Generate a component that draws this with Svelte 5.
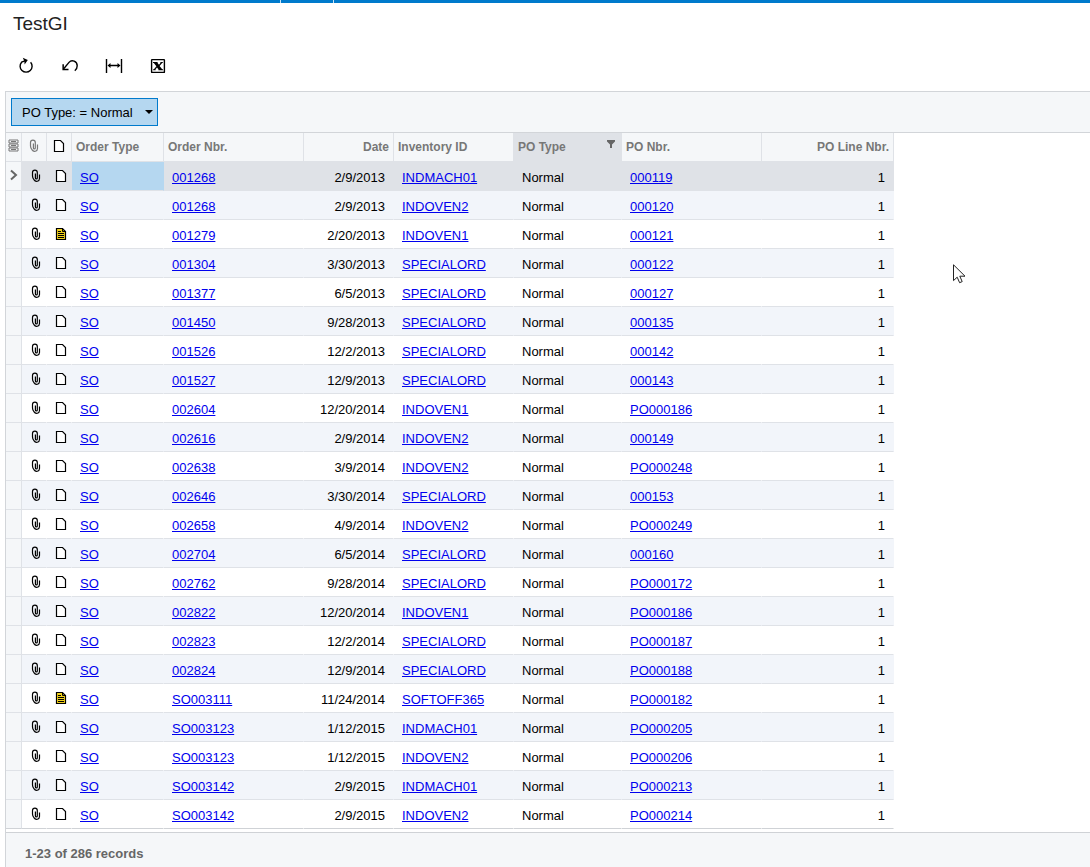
<!-- Generic inquiry screen: toolbar, filter bar and result grid -->
<script>
  let filter = "PO Type: = Normal";
  let total = 286;
  let selected = 0;

  const columns = [
    { title: "Order Type", width: 92 },
    { title: "Order Nbr.", width: 140 },
    { title: "Date", width: 90, right: true },
    { title: "Inventory ID", width: 120 },
    { title: "PO Type", width: 108, filtered: true },
    { title: "PO Nbr.", width: 140 },
    { title: "PO Line Nbr.", width: 132, right: true },
  ];

  const rows = [
    { nbr: "001268", date: "2/9/2013", item: "INDMACH01", po: "000119" },
    { nbr: "001268", date: "2/9/2013", item: "INDOVEN2", po: "000120" },
    { nbr: "001279", date: "2/20/2013", item: "INDOVEN1", po: "000121", note: true },
    { nbr: "001304", date: "3/30/2013", item: "SPECIALORD", po: "000122" },
    { nbr: "001377", date: "6/5/2013", item: "SPECIALORD", po: "000127" },
    { nbr: "001450", date: "9/28/2013", item: "SPECIALORD", po: "000135" },
    { nbr: "001526", date: "12/2/2013", item: "SPECIALORD", po: "000142" },
    { nbr: "001527", date: "12/9/2013", item: "SPECIALORD", po: "000143" },
    { nbr: "002604", date: "12/20/2014", item: "INDOVEN1", po: "PO000186" },
    { nbr: "002616", date: "2/9/2014", item: "INDOVEN2", po: "000149" },
    { nbr: "002638", date: "3/9/2014", item: "INDOVEN2", po: "PO000248" },
    { nbr: "002646", date: "3/30/2014", item: "SPECIALORD", po: "000153" },
    { nbr: "002658", date: "4/9/2014", item: "INDOVEN2", po: "PO000249" },
    { nbr: "002704", date: "6/5/2014", item: "SPECIALORD", po: "000160" },
    { nbr: "002762", date: "9/28/2014", item: "SPECIALORD", po: "PO000172" },
    { nbr: "002822", date: "12/20/2014", item: "INDOVEN1", po: "PO000186" },
    { nbr: "002823", date: "12/2/2014", item: "SPECIALORD", po: "PO000187" },
    { nbr: "002824", date: "12/9/2014", item: "SPECIALORD", po: "PO000188" },
    { nbr: "SO003111", date: "11/24/2014", item: "SOFTOFF365", po: "PO000182", note: true },
    { nbr: "SO003123", date: "1/12/2015", item: "INDMACH01", po: "PO000205" },
    { nbr: "SO003123", date: "1/12/2015", item: "INDOVEN2", po: "PO000206" },
    { nbr: "SO003142", date: "2/9/2015", item: "INDMACH01", po: "PO000213" },
    { nbr: "SO003142", date: "2/9/2015", item: "INDOVEN2", po: "PO000214" },
  ];
</script>

{#snippet clip()}
  <svg class="clip" width="10" height="14" viewBox="0 0 10 14">
    <path d="M8.5 5.5v4a2.9 2.9 0 0 1-5.4 1.4C1.8 9.5 1.5 8.5 1.5 7V3.6a2.4 2.4 0 0 1 4.8 0V9a.9.9 0 0 1-1.9 0V4.5" />
  </svg>
{/snippet}

{#snippet page(note)}
  <svg class="page" width="12" height="14" viewBox="0 0 12 14">
    {#if note}
      <path class="noted" d="M1.5 1.5h6l3 3v8h-9z" />
      <path d="M7.5 1.5v3h3M3 4.5h3M3 6.5h6M3 8.5h6M3 10.5h6" />
    {:else}
      <path class="blank" d="M1.5 1.5h6l3 3v8h-9z" />
    {/if}
  </svg>
{/snippet}

<div class="screen">
  <div class="topbar"><span class="menu"></span><span class="tab"></span></div>

  <h1>TestGI</h1>

  <div class="toolbar">
    <button type="button" aria-label="Refresh">
      <svg width="16" height="18" viewBox="0 0 16 18">
        <path d="M12.6 5.2A6 6 0 1 1 3.6 5.2L7.5 3.6" />
        <path class="solid" d="M4.8 .8L9.8 3L6.6 7.6L6.4 4.2z" />
      </svg>
    </button>
    <button type="button" aria-label="Undo">
      <svg width="16" height="18" viewBox="0 0 16 18">
        <path d="M1.5 12L7 5.4C9.8 2 15.2 4.2 15.2 8.8c0 2.3-.9 3.9-2.4 5" />
        <path class="solid" d="M0.4 7.2h1.5v4.6h4.6v1.5H0.4z" />
      </svg>
    </button>
    <button type="button" aria-label="Fit columns">
      <svg width="18" height="18" viewBox="0 0 18 18">
        <path d="M1.5 2v14M16.5 2v14M4 8.5h10" />
        <path class="solid" d="M2.5 8.5l3-2.5v5zM15.5 8.5l-3-2.5v5z" />
      </svg>
    </button>
    <button type="button" aria-label="Export to Excel">
      <svg width="16" height="18" viewBox="0 0 16 18">
        <rect x="1.6" y="2.6" width="12.8" height="12.8" rx="0.5" />
        <path class="solid" d="M3 5h4.6v1L9 7.8 10.4 6V5h2.4v1h-.7L9.6 9l2.6 3.2h.8v1H8.4v-1L7 10.4 5.6 12.2v1H3.1v-1h.8l2.5-3L3.8 6H3z" />
      </svg>
    </button>
  </div>

  <main>
    <div class="filters">
      <button type="button">
        {filter}
        <svg width="8" height="4" viewBox="0 0 8 4"><path d="M0 0h8L4 4z" /></svg>
      </button>
    </div>

    <table>
      <colgroup>
        <col class="mark" />
        <col class="icon" />
        <col class="icon" />
        {#each columns as column}
          <col style="width: {column.width}px" />
        {/each}
      </colgroup>
      <thead>
        <tr>
          <th class="glyph">
            <svg class="config" width="11" height="14" viewBox="0 0 11 14">
              <path d="M1 1h9v3H1zM1 5h9v3H1zM1 9h9v3H1zM3 2.5h5M3 6.5h5M3 10.5h5" />
            </svg>
          </th>
          <th class="glyph files">{@render clip()}</th>
          <th class="glyph">{@render page(false)}</th>
          {#each columns as column}
            <th class:right={column.right} class:filtered={column.filtered}>
              {column.title}
              {#if column.filtered}
                <svg class="funnel" width="8" height="8" viewBox="0 0 8 8"><path d="M0 0h8v1.5L5 4.5V8H3V4.5L0 1.5z" /></svg>
              {/if}
            </th>
          {/each}
        </tr>
      </thead>
      <tbody>
        {#each rows as row, i}
          <tr class:selected={i === selected}>
            <td class="glyph marker">
              {#if i === selected}
                <svg class="arrow" width="8" height="12" viewBox="0 0 8 12"><path d="M1 1.5L6 6L1 10.5" /></svg>
              {/if}
            </td>
            <td class="glyph shift">{@render clip()}</td>
            <td class="glyph shift">{@render page(row.note)}</td>
            <td class="type"><a href="#order">SO</a></td>
            <td><a href="#order">{row.nbr}</a></td>
            <td class="right">{row.date}</td>
            <td><a href="#item">{row.item}</a></td>
            <td>Normal</td>
            <td><a href="#po">{row.po}</a></td>
            <td class="right">1</td>
          </tr>
        {/each}
      </tbody>
    </table>

    <footer>1-{rows.length} of {total} records</footer>
  </main>

  <svg class="pointer" width="13" height="20" viewBox="0 0 13 20">
    <path d="M.5 .8V16.6L4.2 13.2L6.6 18.7L9.2 17.6L6.8 12.2H12z" />
  </svg>
</div>

<style>
  :global(body) {
    margin: 0;
    background: #fff;
  }
  .screen {
    position: relative;
    display: flex;
    flex-direction: column;
    min-height: 100vh;
    font-family: "Liberation Sans", Arial, sans-serif;
    font-size: 13px;
    color: #000;
  }
  .topbar {
    display: flex;
    height: 3px;
    background: #007acc;
  }
  .topbar span {
    border-right: 1px solid #cce4f5;
  }
  .menu {
    width: 280px;
  }
  .tab {
    width: 52px;
  }
  h1 {
    margin: 0;
    padding: 9px 13px;
    font-size: 19px;
    line-height: 24px;
    font-weight: normal;
    color: #222;
  }

  svg {
    display: block;
    flex: none;
  }
  svg path,
  svg rect {
    fill: none;
    stroke: #000;
  }
  .toolbar {
    display: flex;
    padding: 3px 4px 7px;
  }
  .toolbar button {
    display: flex;
    align-items: center;
    justify-content: center;
    width: 44px;
    height: 36px;
    padding: 0;
    border: 0;
    background: none;
  }
  .toolbar path,
  .toolbar rect {
    stroke-width: 1.4;
  }
  .toolbar .solid {
    fill: #000;
    stroke: none;
  }

  main {
    display: flex;
    flex-direction: column;
    flex: 1;
    margin-left: 5px;
    border-left: 1px solid #d2d5d9;
    border-top: 1px solid #d2d5d9;
  }
  .filters {
    padding: 6px 5px;
    background: #f5f7f9;
    border-bottom: 1px solid #d2d5d9;
  }
  .filters button {
    display: flex;
    align-items: center;
    gap: 12px;
    height: 28px;
    padding: 0 4px 0 10px;
    font: inherit;
    color: #000;
    background: #b5d7f0;
    border: 1px solid #007acc;
  }
  .filters path {
    fill: #000;
    stroke: none;
  }

  table {
    width: 888px;
    table-layout: fixed;
    border-spacing: 0;
  }
  .mark {
    width: 16px;
  }
  .icon {
    width: 25px;
  }
  th,
  td {
    box-sizing: border-box;
    height: 29px;
    text-align: left;
    white-space: nowrap;
    border-right: 1px solid transparent;
    border-bottom: 1px solid #dfe2e7;
  }
  th {
    padding: 0 4px;
    font-size: 12px;
    color: #777;
    background: #f5f7f9;
    border-right-color: #dfe2e7;
  }
  td {
    padding: 2px 8px 0;
  }
  .right {
    text-align: right;
  }
  .filtered {
    background: #dfe2e7;
  }
  .funnel {
    float: right;
    margin-right: 2px;
  }
  .funnel path {
    fill: #666;
    stroke: none;
  }
  .glyph {
    padding: 0 0 2px;
  }
  .glyph svg {
    margin: 0 auto;
  }
  .shift {
    padding: 0 0 0 3px;
  }
  .files path,
  .config path {
    stroke: #777;
  }
  .page path,
  .clip path {
    stroke-width: 1.2;
  }
  .page .blank {
    fill: #fff;
  }
  .page .noted {
    fill: #f2d21b;
  }
  .page .noted + path {
    stroke-width: 1;
  }
  .arrow path {
    stroke: #666;
    stroke-width: 2;
  }
  tbody tr:nth-child(even) {
    background: #f2f5fa;
  }
  tbody tr:last-child td {
    border-bottom-color: #cfd2d6;
  }
  tbody .selected {
    background: #dfe2e7;
  }
  .selected .type {
    background: #b5d7f0;
  }
  tbody .marker {
    background: #f5f7f9;
    border-right-color: #dfe2e7;
  }
  a {
    color: #00e;
  }

  footer {
    flex: 1;
    margin-top: 3px;
    padding: 12px 19px 5px;
    line-height: 17px;
    font-weight: bold;
    color: #666;
    background: #f5f7f9;
    border-top: 1px solid #cfd2d6;
  }

  .pointer {
    position: absolute;
    left: 953px;
    top: 264px;
  }
  .pointer path {
    fill: #fff;
    stroke: #222;
  }
</style>
